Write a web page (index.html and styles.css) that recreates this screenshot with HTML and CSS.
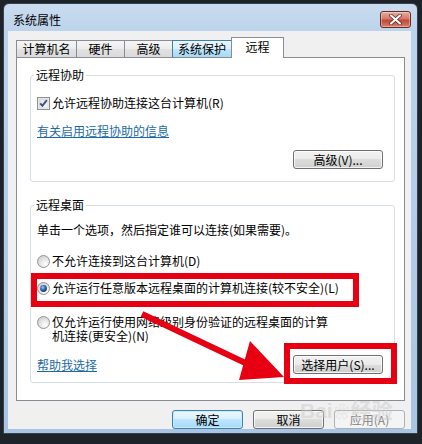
FILE: index.html
```html
<!DOCTYPE html>
<html>
<head>
<meta charset="utf-8">
<link rel="stylesheet" href="styles.css">
</head>
<body>
<div class="window">
  <div class="titlebar">
    <span class="title">系统属性</span>
    <span class="close"><svg width="13" height="11" viewBox="0 0 13 11"><path d="M2 1.5 L11 9.5 M11 1.5 L2 9.5" stroke="#5a1f1a" stroke-width="3.6" stroke-linecap="round"/><path d="M2 1.5 L11 9.5 M11 1.5 L2 9.5" stroke="#ffffff" stroke-width="2.2" stroke-linecap="round"/></svg></span>
  </div>
  <div class="client">
    <div class="tabs">
      <span class="tab t1">计算机名</span>
      <span class="tab t2">硬件</span>
      <span class="tab t3">高级</span>
      <span class="tab t4 hot">系统保护</span>
      <span class="tab active">远程</span>
    </div>
    <div class="panel">
      <fieldset class="group">
        <legend>远程协助</legend>
        <div class="gbody g1">
          <div class="row">
            <svg class="ico" width="13" height="13" viewBox="0 0 13 13"><defs><linearGradient id="cb" x1="0" y1="0" x2="1" y2="1"><stop offset="0" stop-color="#dcdcdc"/><stop offset="1" stop-color="#fbfbfb"/></linearGradient></defs><rect x="0.5" y="0.5" width="12" height="12" fill="#f4f4f4" stroke="#8e8f8f"/><rect x="2" y="2" width="9" height="9" fill="url(#cb)" stroke="#c9cacb" stroke-width="0.6"/><path d="M3.2 6.4 L5.4 8.8 L9.8 3.2" fill="none" stroke="#3b4f8c" stroke-width="1.9"/></svg>
            <span>允许远程协助连接这台计算机(R)</span>
          </div>
          <a class="link">有关启用远程协助的信息</a>
          <div class="btnrow"><button class="btn">高级(V)...</button></div>
        </div>
      </fieldset>
      <fieldset class="group g2wrap">
        <legend>远程桌面</legend>
        <div class="gbody g2">
          <p class="desc">单击一个选项，然后指定谁可以连接(如果需要)。</p>
          <div class="row r1">
            <svg class="ico" width="13" height="13" viewBox="0 0 13 13"><defs><radialGradient id="rg" cx="0.65" cy="0.7" r="0.7"><stop offset="0" stop-color="#ffffff"/><stop offset="1" stop-color="#d2d2d2"/></radialGradient></defs><circle cx="6.5" cy="6.5" r="6" fill="url(#rg)" stroke="#959595"/></svg>
            <span>不允许连接到这台计算机(D)</span>
          </div>
          <div class="row r2">
            <svg class="ico" width="13" height="13" viewBox="0 0 13 13"><defs><radialGradient id="rd" cx="0.4" cy="0.35" r="0.7"><stop offset="0" stop-color="#a9cdf2"/><stop offset="0.5" stop-color="#2f6bb0"/><stop offset="1" stop-color="#0f2f66"/></radialGradient></defs><circle cx="6.5" cy="6.5" r="6" fill="url(#rg)" stroke="#959595"/><circle cx="6.5" cy="6.5" r="3.4" fill="url(#rd)"/></svg>
            <span>允许运行任意版本远程桌面的计算机连接(较不安全)(L)</span>
          </div>
          <div class="row r3">
            <svg class="ico" width="13" height="13" viewBox="0 0 13 13"><circle cx="6.5" cy="6.5" r="6" fill="url(#rg)" stroke="#959595"/></svg>
            <span>仅允许运行使用网络级别身份验证的远程桌面的计算<br>机连接(更安全)(N)</span>
          </div>
          <div class="bottomrow">
            <a class="link help">帮助我选择</a>
            <button class="btn">选择用户(S)...</button>
          </div>
        </div>
      </fieldset>
    </div>
    <div class="footer">
      <button class="btn fbtn default">确定</button>
      <button class="btn fbtn">取消</button>
      <button class="btn fbtn disabled">应用(A)</button>
    </div>
  </div>
</div>
<div class="annot box1"></div>
<div class="annot box2"></div>
<svg class="arrow" width="422" height="444" viewBox="0 0 422 444"><line x1="142" y1="314" x2="258" y2="369" stroke="#e60012" stroke-width="6"/><polygon points="284,377 250,341 239,380" fill="#e60012"/></svg>
<div class="watermark">Bai<span class="paw">&#x2740;</span>经验</div>
</body>
</html>
```
FILE: styles.css
```css
* { box-sizing: border-box; }
html, body { margin: 0; padding: 0; }
body {
  width: 422px;
  height: 444px;
  background: #1d2329;
  padding: 3px 0 0 3px;
  font-family: "Noto Sans CJK SC", "Noto Sans", sans-serif;
  font-size: 12px;
  color: #000;
  position: relative;
  overflow: hidden;
}
.window {
  width: 415px;
  height: 431px;
  border: 1px solid #34424f;
  border-radius: 6px 6px 0 0;
  background: linear-gradient(#cadcef, #bcd3eb 28px, #b1cbe7 60%, #a9c5e3);
  padding: 0 6px 0 4px;
}
.titlebar {
  height: 27px;
  display: flex;
  justify-content: space-between;
  align-items: flex-start;
}
.title {
  margin: 8px 0 0 5px;
  line-height: 16px;
  color: #000;
}
.close {
  margin-top: 7px;
  width: 31px;
  height: 17px;
  border: 1px solid #6a2a24;
  border-radius: 3px;
  background: linear-gradient(#e8ab9e, #d57a68 45%, #c1463a 55%, #d5806c);
  display: flex;
  align-items: center;
  justify-content: center;
  box-shadow: inset 0 0 0 1px rgba(255,255,255,0.35);
}
.client {
  height: 398px;
  background: #f0f0f0;
  padding: 6px 6px 0 8px;
}
.tabs {
  display: flex;
  align-items: flex-end;
  height: 20px;
}
.tab {
  height: 17px;
  border: 1px solid #898c95;
  border-bottom: none;
  margin-right: -1px;
  background: linear-gradient(#f5f5f5, #ececec 50%, #e2e2e2 50%, #dadada);
  text-align: center;
  line-height: 16px;
}
.t1 { width: 61px; }
.t2 { width: 49px; }
.t3 { width: 49px; }
.t4 { width: 60px; }
.tab.hot {
  background: linear-gradient(#eaf6fd, #d9f0fc 50%, #bee6fd 50%, #a7d9f5);
  border-color: #3c7fb1;
  border-right-color: #898c95;
}
.tab.active {
  width: 53px;
  height: 21px;
  margin-bottom: -1px;
  background: #fff;
  position: relative;
  z-index: 1;
  padding-top: 1px;
}
.panel {
  width: 389px;
  height: 344px;
  border: 1px solid #898c95;
  background: #fff;
  padding: 9px 9px 0 13px;
}
.group {
  margin: 0;
  padding: 0;
  border: 1px solid #d5dfe5;
  border-radius: 3px;
  min-width: 0;
}
.group legend {
  margin-left: 3px;
  padding: 0 2px;
  line-height: 16px;
}
.g2wrap { margin-top: 15px; }
.g1 { padding: 12px 11px 12px 6px; }
.g2 { padding: 9px 11px 8px 6px; }
.row {
  display: flex;
  align-items: center;
  gap: 2px;
  line-height: 16px;
}
.ico { flex: none; display: block; }
.link {
  display: block;
  margin-top: 12px;
  line-height: 16px;
  color: #1b6aa8;
  text-decoration: underline;
}
.btnrow {
  display: flex;
  justify-content: flex-end;
  margin-top: 11px;
}
.btn {
  width: 90px;
  height: 19px;
  padding: 0;
  border: 1px solid #707070;
  border-radius: 3px;
  background: linear-gradient(#f2f2f2, #ebebeb 50%, #dddddd 50%, #cfcfcf);
  box-shadow: inset 0 0 0 1px rgba(255,255,255,0.75);
  font-family: inherit;
  font-size: 12px;
  line-height: 16px;
  color: #000;
}
.desc { margin: 0; line-height: 16px; }
.r1 { margin-top: 15px; }
.r2 { margin-top: 11px; }
.r3 {
  margin-top: 19px;
  align-items: flex-start;
  line-height: 14px;
}
.r3 .ico { margin-top: 1px; }
.bottomrow {
  display: flex;
  justify-content: space-between;
  align-items: center;
  margin-top: 12px;
}
.help { margin-top: 0; }
.footer {
  display: flex;
  justify-content: flex-end;
  gap: 10px;
  margin-top: 9px;
}
.fbtn { width: 71px; }
.btn.default {
  border-color: #3c7fb1;
  background: linear-gradient(#eaf6fd, #d9f0fc 50%, #bee6fd 50%, #a7d9f5);
  box-shadow: inset 0 0 0 1px rgba(200,235,255,0.9);
}
.btn.disabled {
  border-color: #adb2b5;
  background: #f4f4f4;
  color: #838383;
  box-shadow: none;
}
.annot {
  position: absolute;
  border: 6px solid #e60012;
}
.box1 { left: 31px; top: 273px; width: 328px; height: 34px; }
.box2 { left: 284px; top: 343px; width: 113px; height: 41px; }
.arrow {
  position: absolute;
  left: 0;
  top: 0;
  pointer-events: none;
}
.watermark {
  position: absolute;
  left: 300px;
  top: 399px;
  font-family: "Liberation Sans", "Noto Sans CJK SC", sans-serif;
  font-size: 21px;
  font-weight: bold;
  color: rgba(205, 205, 205, 0.55);
  line-height: 24px;
  white-space: nowrap;
}
.paw { font-size: 16px; margin: 0 1px; }
```
